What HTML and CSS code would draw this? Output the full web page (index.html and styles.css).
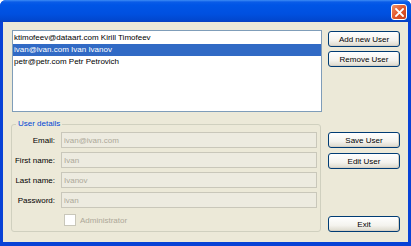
FILE: index.html
```html
<!DOCTYPE html>
<html>
<head>
  <title>Users</title>
  <link rel="stylesheet" href="styles.css">
</head>
<body>
  <div class="window">
    <div class="titlebar">
      <span class="close-btn">
        <svg width="9" height="9" viewBox="0 0 9 9">
          <path d="M1 1 L8 8 M8 1 L1 8" stroke="#fff" stroke-width="1.8" stroke-linecap="square"/>
        </svg>
      </span>
    </div>
    <div class="window-body">
      <div class="top-row">
        <ul id="users-list" class="user-list">
          <li>ktimofeev@dataart.com Kirill Timofeev</li>
          <li class="selected">ivan@ivan.com Ivan Ivanov</li>
          <li>petr@petr.com Petr Petrovich</li>
        </ul>
        <div class="side-buttons">
          <button type="button">Add new User</button>
          <button type="button">Remove User</button>
        </div>
      </div>
      <div class="bottom-row">
        <fieldset class="details">
          <legend>User details</legend>
          <div class="form-group">
            <label for="email">Email:</label>
            <input type="text" id="email" value="ivan@ivan.com" disabled>
          </div>
          <div class="form-group">
            <label for="first-name">First name:</label>
            <input type="text" id="first-name" value="Ivan" disabled>
          </div>
          <div class="form-group">
            <label for="last-name">Last name:</label>
            <input type="text" id="last-name" value="Ivanov" disabled>
          </div>
          <div class="form-group">
            <label for="password">Password:</label>
            <input type="text" id="password" value="ivan" disabled>
          </div>
          <div class="check-group">
            <span class="checkbox"></span>
            <span class="check-label">Administrator</span>
          </div>
        </fieldset>
        <div class="side-buttons details-buttons">
          <button type="button">Save User</button>
          <button type="button">Edit User</button>
          <button type="button" class="exit-btn">Exit</button>
        </div>
      </div>
    </div>
  </div>
</body>
</html>
```

FILE: styles.css
```css
body {
  margin: 0;
  font-family: "Liberation Sans", Arial, sans-serif;
  font-size: 8px;
  color: #000;
}

.window {
  width: 411px;
  height: 246px;
  background: #0842d6;
  border-radius: 6px 6px 0 0;
  display: flex;
  flex-direction: column;
}

.titlebar {
  height: 22px;
  border-radius: 6px 6px 0 0;
  background: linear-gradient(#3d8cf5 0, #0a5ce8 2px, #0055e6 5px, #0050e0 14px, #0147cf 20px, #0a40c0 22px);
  display: flex;
  justify-content: flex-end;
  align-items: flex-start;
  padding-right: 4px;
}

.close-btn {
  margin-top: 4px;
  width: 14px;
  height: 14px;
  border: 1px solid #fff;
  border-radius: 3px;
  background: linear-gradient(135deg, #f0936a, #e2572a 50%, #c8401c);
  display: flex;
  align-items: center;
  justify-content: center;
}

.window-body {
  flex: 1;
  margin: 0 3px 4px 3px;
  background: #ece9d8;
  padding: 8px 8px 0 9px;
}

.top-row {
  display: flex;
  gap: 6px;
}

.user-list {
  list-style: none;
  margin: 0;
  padding: 1px 0 0 0;
  width: 308px;
  height: 79px;
  background: #fff;
  border: 1px solid #7f9db9;
}

.user-list li {
  height: 12px;
  line-height: 12px;
  padding-left: 1px;
  white-space: nowrap;
}

.user-list li.selected {
  background: #316ac5;
  color: #fff;
}

.side-buttons {
  display: flex;
  flex-direction: column;
  gap: 4px;
  padding-top: 1px;
}

button {
  width: 72px;
  height: 16px;
  padding: 0;
  font-family: "Liberation Sans", Arial, sans-serif;
  font-size: 8px;
  color: #000;
  border: 1px solid #003c74;
  border-radius: 3px;
  background: linear-gradient(#ffffff, #f4f3ee 60%, #dcd9cc);
  box-shadow: inset -1px -1px 0 #d6d0c5;
}

.bottom-row {
  display: flex;
  gap: 7px;
  margin-top: 7px;
  margin-left: -1px;
}

.details {
  margin: 0;
  width: 308px;
  height: 108px;
  padding: 3px 3px 0 0;
  border: 1px solid #d0d0bf;
  border-radius: 3px;
}

.details legend {
  margin-left: 4px;
  padding: 0 2px;
  line-height: 10px;
  color: #0046d5;
}

.form-group {
  display: flex;
  align-items: center;
  gap: 6px;
  height: 16px;
  margin-bottom: 4px;
}

.form-group label {
  width: 43px;
  text-align: right;
}

.form-group input {
  flex: 1;
  box-sizing: border-box;
  height: 16px;
  margin: 0;
  padding: 0 2px;
  font-family: "Liberation Sans", Arial, sans-serif;
  font-size: 8px;
  color: #aca899;
  background: #edebe0;
  border: 1px solid #c9c7ba;
}

.check-group {
  display: flex;
  align-items: center;
  gap: 4px;
  margin-top: 6px;
  padding-left: 52px;
}

.checkbox {
  width: 10px;
  height: 10px;
  background: #fff;
  border: 1px solid #c9c7ba;
}

.check-label {
  color: #aca899;
}

.details-buttons {
  padding-top: 13px;
  gap: 5px;
}

.exit-btn {
  margin-top: auto;
}
```
